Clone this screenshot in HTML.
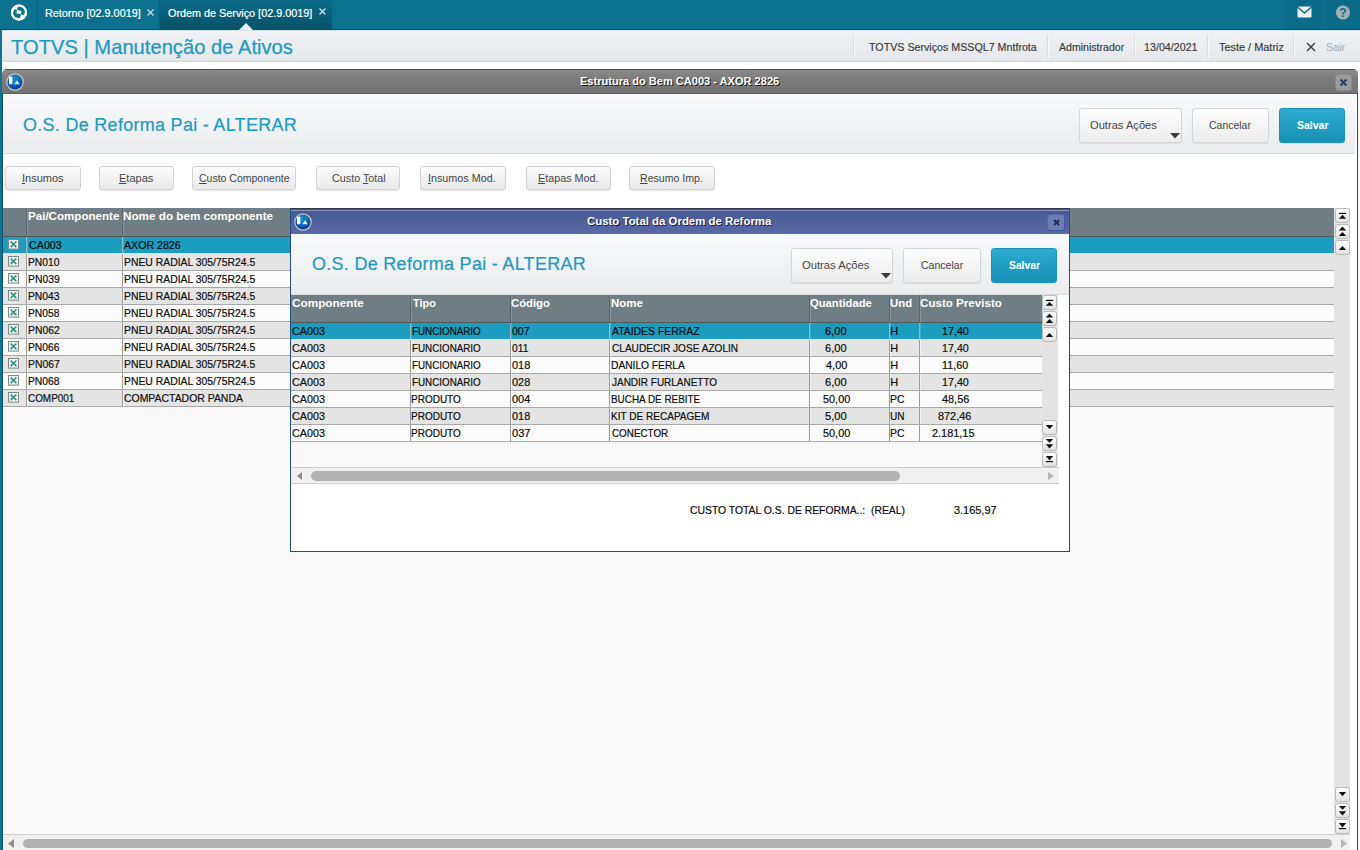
<!DOCTYPE html>
<html lang="pt-BR">
<head>
<meta charset="utf-8">
<title>TOTVS | Manutenção de Ativos</title>
<style>
*{box-sizing:border-box;margin:0;padding:0}
html,body{width:1360px;height:850px;overflow:hidden;background:#f9f9f9;font-family:"Liberation Sans",Arial,sans-serif;font-size:11px;color:#222}
.abs{position:absolute}
#page{position:relative;width:1360px;height:850px;overflow:hidden;background:#f9f9f9}
.t{position:absolute;white-space:pre;line-height:1;transform-origin:0 0}
.t u{text-decoration:underline;text-underline-offset:1px}
#topbar{left:0;top:0;width:1360px;height:30px;background:#0c718e}
#topbar .sep{position:absolute;top:0;width:1px;height:30px;background:#0a5f79}
#bar2{left:2px;top:30px;width:1358px;height:32px;background:linear-gradient(#cfe2e8 0,#cfe2e8 1px,#f0f2f5 1px,#e5e8eb 30px,#d6dadd 31px,#d6dadd 32px)}
#bar2 .s{position:absolute;top:5px;width:1px;height:22px;background:#dadde0;border-right:1px solid #f7f8f9;box-sizing:content-box}
.hdr{position:absolute;background:linear-gradient(#f8f9fa,#ebecee);border-bottom:1px solid #d9dadc}
.btn{position:absolute;border:1px solid #d4d4d4;border-radius:3px;background:linear-gradient(#fdfdfd,#ececec);box-shadow:0 1px 1px rgba(0,0,0,.08)}
.btn.pri{border:1px solid #1a93b6;background:linear-gradient(#2eabd0,#1790b5)}
.tb{position:absolute;top:166px;height:24px;border:1px solid #d2d2d2;border-radius:3px;background:linear-gradient(#fcfcfc,#e9e9e9);box-shadow:0 1px 1px rgba(0,0,0,.1)}
.row{position:absolute;height:17px;border-bottom:1px solid #a9a9a9}
.row.o{background:#fbfbfb}
.row.e{background:#e4e4e4}
.row.sel{background:#1c9dc0;border-bottom-color:#cfe3ea}
.vs{position:absolute;width:2px;border-left:1px solid #9c9c9c;background:rgba(255,255,255,.55)}
.vs.h{border-left-color:#55636a;background:rgba(255,255,255,.18)}
.vs.s{border-left-color:#8fb9c6;background:rgba(255,255,255,.15)}
.sb{position:absolute;width:15px;height:15px;border:1px solid #bababa;border-radius:3px;background:linear-gradient(#fdfdfd,#e2e2e2)}
.sb svg{position:absolute;left:-1px;top:-1px}
</style>
</head>
<body>
<div id="page">
<div class="abs" style="left:0;top:30px;width:2px;height:820px;background:#10748f"></div>
<div id="topbar" class="abs">
<div class="abs" style="left:0;top:29px;width:1360px;height:1px;background:#085a72"></div>
<svg class="abs" style="left:9px;top:2px" width="20" height="21" viewBox="0 0 20 21">
  <circle cx="10" cy="10.5" r="8" fill="#fff"/>
  <g transform="rotate(12 10 10.5)"><path fill-rule="evenodd" fill="#0c718e" d="M7.6 4.6 H15.6 V11.9 H7.6 Z M4.4 8.4 H12.2 V16 H4.4 Z"/></g>
  <circle cx="10" cy="10.5" r="7" fill="none" stroke="#fff" stroke-width="2"/>
</svg>
<div class="sep" style="left:37px"></div>
<span class="t" style="left:45.22px;top:8px;font-size:11px;color:#fff;transform:scaleX(0.9843);-webkit-text-stroke:.2px #fff">Retorno [02.9.0019]</span>
<svg class="abs" style="left:147px;top:9px" width="7" height="7" viewBox="0 0 7 7"><path d="M.5 .5 L6.5 6.5 M6.5 .5 L.5 6.5" stroke="#d3e3ea" stroke-width="1.2" fill="none"/></svg>
<div class="sep" style="left:159px"></div>
<div class="abs" style="left:160px;top:0;width:172px;height:30px;background:linear-gradient(#0c6d89,#075168)"></div>
<span class="t" style="left:167.91px;top:8px;font-size:11px;color:#fff;transform:scaleX(0.9828);-webkit-text-stroke:.2px #fff">Ordem de Serviço [02.9.0019]</span>
<svg class="abs" style="left:319px;top:8px" width="7" height="7" viewBox="0 0 7 7"><path d="M.5 .5 L6.5 6.5 M6.5 .5 L.5 6.5" stroke="#d3e3ea" stroke-width="1.2" fill="none"/></svg>
<div class="abs" style="left:239px;top:23px;width:0;height:0;border-left:7px solid transparent;border-right:7px solid transparent;border-bottom:7px solid #eff1f4"></div>
<div class="abs" style="left:1283px;top:0;width:77px;height:29px;background:linear-gradient(90deg,#0c718e,#0a6c89 7px)"></div>
<div class="sep" style="left:1323px;background:#266a86;height:29px"></div>
<svg class="abs" style="left:1297px;top:6px" width="16" height="13" viewBox="0 0 16 13">
  <rect x="0.5" y="0.5" width="14" height="11" rx="1.2" fill="#e9eff2"/>
  <path d="M0.5 1 L7.5 7 L14.5 1" fill="none" stroke="#0a6c89" stroke-width="1.5"/></svg>
<svg class="abs" style="left:1335px;top:5px" width="16" height="16" viewBox="0 0 16 16">
  <circle cx="8" cy="7.5" r="7" fill="#a3b1b6"/>
  <text x="8" y="12" font-family="Liberation Sans, sans-serif" font-weight="bold" font-size="12" text-anchor="middle" fill="#0a6c89">?</text></svg>
</div>
<div id="bar2" class="abs">
<div class="s" style="left:851px"></div>
<div class="s" style="left:1045px"></div>
<div class="s" style="left:1132px"></div>
<div class="s" style="left:1205px"></div>
<div class="s" style="left:1291px"></div>
</div>
<span class="t" style="left:10.6px;top:37px;font-size:20.2px;color:#1b9bc1;transform:scaleX(0.9995);-webkit-text-stroke:.25px #1b9bc1">TOTVS | Manutenção de Ativos</span>
<span class="t" style="left:869.26px;top:42px;font-size:11px;color:#383838;transform:scaleX(0.9710);-webkit-text-stroke:.15px #383838">TOTVS Serviços MSSQL7 Mntfrota</span>
<span class="t" style="left:1058.9px;top:42px;font-size:11px;color:#383838;transform:scaleX(0.9609);-webkit-text-stroke:.15px #383838">Administrador</span>
<span class="t" style="left:1143.97px;top:42px;font-size:11px;color:#383838;transform:scaleX(0.9730);-webkit-text-stroke:.15px #383838">13/04/2021</span>
<span class="t" style="left:1218.65px;top:42px;font-size:11px;color:#383838;transform:scaleX(0.9922);-webkit-text-stroke:.15px #383838">Teste / Matriz</span>
<svg class="abs" style="left:1306px;top:42px" width="10" height="10" viewBox="0 0 10 10"><path d="M1 1 L9 9 M9 1 L1 9" stroke="#444" stroke-width="1.5" fill="none"/></svg>
<span class="t" style="left:1326.11px;top:42px;font-size:11px;color:#a4a9ad;transform:scaleX(0.9789)">Sair</span>
<div class="abs" style="left:2px;top:62px;width:1358px;height:7px;background:#fff"></div>
<div class="abs" style="left:2px;top:69px;width:1356px;height:25px;border-radius:5px 5px 0 0;background:linear-gradient(#4e4e4e 0,#4e4e4e 1px,#8c8c8c 1px,#868686 3px,#7a7a7a 45%,#747474 23px,#747474 24px,#5c5c5c 24px)"></div>
<span class="t" style="left:580.05px;top:76px;font-size:11px;color:#fff;transform:scaleX(1.0046);font-weight:bold;text-shadow:1px 1px 0 #1c1c1c">Estrutura do Bem CA003 - AXOR 2826</span>
<svg class="abs" style="left:4.5px;top:72px" width="20" height="20" viewBox="0 0 20 20">
  <defs><radialGradient id="bga" cx="45%" cy="30%" r="75%"><stop offset="0" stop-color="#1f8fdc"/><stop offset="0.55" stop-color="#0c62b8"/><stop offset="1" stop-color="#07358a"/></radialGradient></defs>
  <circle cx="10" cy="10" r="8.8" fill="#c9c7c0"/>
  <circle cx="10" cy="10" r="7.6" fill="url(#bga)"/>
  <rect x="4" y="4.6" width="3.4" height="7.6" rx=".8" fill="#fff" opacity=".95"/>
  <rect x="9.6" y="4.6" width="4.8" height="4" fill="#0a86a6" opacity=".75"/>
  <path d="M12 8.2 L14.8 12.2 L9.2 12.2 Z" fill="#d9f1fc"/>
</svg>
<div class="abs" style="left:1335px;top:74px;width:17px;height:17px;border-radius:3px;background:#9b9b9b;border:1px solid #8b8b8b"></div>
<svg class="abs" style="left:1339px;top:78px" width="9" height="9" viewBox="0 0 9 9"><path d="M1.5 1.5 L7.5 7.5 M7.5 1.5 L1.5 7.5" stroke="#2a3a5e" stroke-width="2" fill="none"/></svg>
<div class="abs" style="left:2px;top:94px;width:1356px;height:756px;background:#fff;border-left:1px solid #0e4f7c;border-right:1px solid #1d4f82"></div>
<div class="hdr" style="left:3px;top:94px;width:1352px;height:60px"></div>
<span class="t" style="left:23.45px;top:116px;font-size:18px;color:#1b9bc1;transform:scaleX(0.9985);letter-spacing:.3px;-webkit-text-stroke:.2px #1b9bc1">O.S. De Reforma Pai - ALTERAR</span>
<div class="btn" style="left:1079px;top:108px;width:103px;height:35px"></div>
<span class="t" style="left:1090.42px;top:120px;font-size:11.5px;color:#444;transform:scaleX(0.9685)">Outras Ações</span>
<svg class="abs" style="left:1169.5px;top:133px" width="10" height="6" viewBox="0 0 10 6"><path d="M0 0 L10 0 L5 5.5 Z" fill="#3a3a3a"/></svg>
<div class="btn" style="left:1192px;top:108px;width:77px;height:35px"></div>
<span class="t" style="left:1209.14px;top:120px;font-size:11.5px;color:#444;transform:scaleX(0.9105)">Cancelar</span>
<div class="btn pri" style="left:1279px;top:108px;width:66px;height:35px"></div>
<span class="t" style="left:1296.54px;top:120px;font-size:11.5px;color:#fff;transform:scaleX(0.9118);font-weight:bold">Salvar</span>
<div class="tb" style="left:5px;width:76px"></div>
<span class="t" style="left:21.5px;top:173px;font-size:11px;color:#454545;transform:scaleX(0.9988)"><u>I</u>nsumos</span>
<div class="tb" style="left:99px;width:75px"></div>
<span class="t" style="left:118.6px;top:173px;font-size:11px;color:#454545;transform:scaleX(1.0030)"><u>E</u>tapas</span>
<div class="tb" style="left:192px;width:104px"></div>
<span class="t" style="left:198.52px;top:173px;font-size:11px;color:#454545;transform:scaleX(0.9547)"><u>C</u>usto Componente</span>
<div class="tb" style="left:316px;width:84px"></div>
<span class="t" style="left:331.91px;top:173px;font-size:11px;color:#454545;transform:scaleX(0.9794)">Custo <u>T</u>otal</span>
<div class="tb" style="left:420px;width:86px"></div>
<span class="t" style="left:428.42px;top:173px;font-size:11px;color:#454545;transform:scaleX(0.9791)"><u>I</u>nsumos Mod.</span>
<div class="tb" style="left:526px;width:85px"></div>
<span class="t" style="left:537.52px;top:173px;font-size:11px;color:#454545;transform:scaleX(0.9791)"><u>E</u>tapas Mod.</span>
<div class="tb" style="left:629px;width:86px"></div>
<span class="t" style="left:640.44px;top:173px;font-size:11px;color:#454545;transform:scaleX(0.9591)"><u>R</u>esumo Imp.</span>
<div class="abs" style="left:3px;top:208px;width:1331px;height:628px;background:#f9f9f9"></div>
<div class="abs" style="left:3px;top:208px;width:1331px;height:29px;background:#6f7e83;border-bottom:1px solid #4d595d"></div>
<div class="vs h" style="left:26px;top:208px;height:28px"></div>
<span class="t" style="left:27.74px;top:211px;font-size:11.5px;color:#fff;transform:scaleX(1.0067);font-weight:bold">Pai/Componente</span>
<div class="vs h" style="left:122px;top:208px;height:28px"></div>
<span class="t" style="left:123.04px;top:211px;font-size:11.5px;color:#fff;transform:scaleX(1.0171);font-weight:bold">Nome do bem componente</span>
<div class="row sel" style="left:3px;top:237px;width:1331px"></div>
<div class="vs s" style="left:26px;top:237px;height:16px"></div>
<div class="vs s" style="left:122px;top:237px;height:16px"></div>
<svg class="abs" style="left:8px;top:239px" width="11" height="11" viewBox="0 0 11 11"><rect x="0.5" y="0.5" width="10" height="9.6" fill="#f2f5f5" stroke="#7d8a8a"/><path d="M2.6 2.5 L8.4 8.1 M8.4 2.5 L2.6 8.1" stroke="#2b8a7c" stroke-width="1.5" fill="none"/></svg>
<span class="t" style="left:28.51px;top:240px;font-size:11px;color:#0d0d0d;transform:scaleX(0.9740);-webkit-text-stroke:.2px #0d0d0d">CA003</span>
<span class="t" style="left:124.3px;top:240px;font-size:11px;color:#0d0d0d;transform:scaleX(0.9648);-webkit-text-stroke:.2px #0d0d0d">AXOR 2826</span>
<div class="row e" style="left:3px;top:254px;width:1331px"></div>
<div class="vs " style="left:26px;top:254px;height:16px"></div>
<div class="vs " style="left:122px;top:254px;height:16px"></div>
<svg class="abs" style="left:8px;top:256px" width="11" height="11" viewBox="0 0 11 11"><rect x="0.5" y="0.5" width="10" height="9.6" fill="#f2f5f5" stroke="#7d8a8a"/><path d="M2.6 2.5 L8.4 8.1 M8.4 2.5 L2.6 8.1" stroke="#2b8a7c" stroke-width="1.5" fill="none"/></svg>
<span class="t" style="left:27.96px;top:257px;font-size:11px;color:#0d0d0d;transform:scaleX(0.9364);-webkit-text-stroke:.2px #0d0d0d">PN010</span>
<span class="t" style="left:123.66px;top:257px;font-size:11px;color:#0d0d0d;transform:scaleX(0.9440);-webkit-text-stroke:.2px #0d0d0d">PNEU RADIAL 305/75R24.5</span>
<div class="row o" style="left:3px;top:271px;width:1331px"></div>
<div class="vs " style="left:26px;top:271px;height:16px"></div>
<div class="vs " style="left:122px;top:271px;height:16px"></div>
<svg class="abs" style="left:8px;top:273px" width="11" height="11" viewBox="0 0 11 11"><rect x="0.5" y="0.5" width="10" height="9.6" fill="#f2f5f5" stroke="#7d8a8a"/><path d="M2.6 2.5 L8.4 8.1 M8.4 2.5 L2.6 8.1" stroke="#2b8a7c" stroke-width="1.5" fill="none"/></svg>
<span class="t" style="left:27.96px;top:274px;font-size:11px;color:#0d0d0d;transform:scaleX(0.9438);-webkit-text-stroke:.2px #0d0d0d">PN039</span>
<span class="t" style="left:123.66px;top:274px;font-size:11px;color:#0d0d0d;transform:scaleX(0.9440);-webkit-text-stroke:.2px #0d0d0d">PNEU RADIAL 305/75R24.5</span>
<div class="row e" style="left:3px;top:288px;width:1331px"></div>
<div class="vs " style="left:26px;top:288px;height:16px"></div>
<div class="vs " style="left:122px;top:288px;height:16px"></div>
<svg class="abs" style="left:8px;top:290px" width="11" height="11" viewBox="0 0 11 11"><rect x="0.5" y="0.5" width="10" height="9.6" fill="#f2f5f5" stroke="#7d8a8a"/><path d="M2.6 2.5 L8.4 8.1 M8.4 2.5 L2.6 8.1" stroke="#2b8a7c" stroke-width="1.5" fill="none"/></svg>
<span class="t" style="left:27.96px;top:291px;font-size:11px;color:#0d0d0d;transform:scaleX(0.9364);-webkit-text-stroke:.2px #0d0d0d">PN043</span>
<span class="t" style="left:123.66px;top:291px;font-size:11px;color:#0d0d0d;transform:scaleX(0.9440);-webkit-text-stroke:.2px #0d0d0d">PNEU RADIAL 305/75R24.5</span>
<div class="row o" style="left:3px;top:305px;width:1331px"></div>
<div class="vs " style="left:26px;top:305px;height:16px"></div>
<div class="vs " style="left:122px;top:305px;height:16px"></div>
<svg class="abs" style="left:8px;top:307px" width="11" height="11" viewBox="0 0 11 11"><rect x="0.5" y="0.5" width="10" height="9.6" fill="#f2f5f5" stroke="#7d8a8a"/><path d="M2.6 2.5 L8.4 8.1 M8.4 2.5 L2.6 8.1" stroke="#2b8a7c" stroke-width="1.5" fill="none"/></svg>
<span class="t" style="left:27.96px;top:308px;font-size:11px;color:#0d0d0d;transform:scaleX(0.9364);-webkit-text-stroke:.2px #0d0d0d">PN058</span>
<span class="t" style="left:123.66px;top:308px;font-size:11px;color:#0d0d0d;transform:scaleX(0.9440);-webkit-text-stroke:.2px #0d0d0d">PNEU RADIAL 305/75R24.5</span>
<div class="row e" style="left:3px;top:322px;width:1331px"></div>
<div class="vs " style="left:26px;top:322px;height:16px"></div>
<div class="vs " style="left:122px;top:322px;height:16px"></div>
<svg class="abs" style="left:8px;top:324px" width="11" height="11" viewBox="0 0 11 11"><rect x="0.5" y="0.5" width="10" height="9.6" fill="#f2f5f5" stroke="#7d8a8a"/><path d="M2.6 2.5 L8.4 8.1 M8.4 2.5 L2.6 8.1" stroke="#2b8a7c" stroke-width="1.5" fill="none"/></svg>
<span class="t" style="left:27.96px;top:325px;font-size:11px;color:#0d0d0d;transform:scaleX(0.9438);-webkit-text-stroke:.2px #0d0d0d">PN062</span>
<span class="t" style="left:123.66px;top:325px;font-size:11px;color:#0d0d0d;transform:scaleX(0.9440);-webkit-text-stroke:.2px #0d0d0d">PNEU RADIAL 305/75R24.5</span>
<div class="row o" style="left:3px;top:339px;width:1331px"></div>
<div class="vs " style="left:26px;top:339px;height:16px"></div>
<div class="vs " style="left:122px;top:339px;height:16px"></div>
<svg class="abs" style="left:8px;top:341px" width="11" height="11" viewBox="0 0 11 11"><rect x="0.5" y="0.5" width="10" height="9.6" fill="#f2f5f5" stroke="#7d8a8a"/><path d="M2.6 2.5 L8.4 8.1 M8.4 2.5 L2.6 8.1" stroke="#2b8a7c" stroke-width="1.5" fill="none"/></svg>
<span class="t" style="left:27.96px;top:342px;font-size:11px;color:#0d0d0d;transform:scaleX(0.9364);-webkit-text-stroke:.2px #0d0d0d">PN066</span>
<span class="t" style="left:123.66px;top:342px;font-size:11px;color:#0d0d0d;transform:scaleX(0.9440);-webkit-text-stroke:.2px #0d0d0d">PNEU RADIAL 305/75R24.5</span>
<div class="row e" style="left:3px;top:356px;width:1331px"></div>
<div class="vs " style="left:26px;top:356px;height:16px"></div>
<div class="vs " style="left:122px;top:356px;height:16px"></div>
<svg class="abs" style="left:8px;top:358px" width="11" height="11" viewBox="0 0 11 11"><rect x="0.5" y="0.5" width="10" height="9.6" fill="#f2f5f5" stroke="#7d8a8a"/><path d="M2.6 2.5 L8.4 8.1 M8.4 2.5 L2.6 8.1" stroke="#2b8a7c" stroke-width="1.5" fill="none"/></svg>
<span class="t" style="left:27.96px;top:359px;font-size:11px;color:#0d0d0d;transform:scaleX(0.9438);-webkit-text-stroke:.2px #0d0d0d">PN067</span>
<span class="t" style="left:123.66px;top:359px;font-size:11px;color:#0d0d0d;transform:scaleX(0.9440);-webkit-text-stroke:.2px #0d0d0d">PNEU RADIAL 305/75R24.5</span>
<div class="row o" style="left:3px;top:373px;width:1331px"></div>
<div class="vs " style="left:26px;top:373px;height:16px"></div>
<div class="vs " style="left:122px;top:373px;height:16px"></div>
<svg class="abs" style="left:8px;top:375px" width="11" height="11" viewBox="0 0 11 11"><rect x="0.5" y="0.5" width="10" height="9.6" fill="#f2f5f5" stroke="#7d8a8a"/><path d="M2.6 2.5 L8.4 8.1 M8.4 2.5 L2.6 8.1" stroke="#2b8a7c" stroke-width="1.5" fill="none"/></svg>
<span class="t" style="left:27.96px;top:376px;font-size:11px;color:#0d0d0d;transform:scaleX(0.9364);-webkit-text-stroke:.2px #0d0d0d">PN068</span>
<span class="t" style="left:123.66px;top:376px;font-size:11px;color:#0d0d0d;transform:scaleX(0.9440);-webkit-text-stroke:.2px #0d0d0d">PNEU RADIAL 305/75R24.5</span>
<div class="row e" style="left:3px;top:390px;width:1331px"></div>
<div class="vs " style="left:26px;top:390px;height:16px"></div>
<div class="vs " style="left:122px;top:390px;height:16px"></div>
<svg class="abs" style="left:8px;top:392px" width="11" height="11" viewBox="0 0 11 11"><rect x="0.5" y="0.5" width="10" height="9.6" fill="#f2f5f5" stroke="#7d8a8a"/><path d="M2.6 2.5 L8.4 8.1 M8.4 2.5 L2.6 8.1" stroke="#2b8a7c" stroke-width="1.5" fill="none"/></svg>
<span class="t" style="left:28.45px;top:393px;font-size:11px;color:#0d0d0d;transform:scaleX(0.9015);-webkit-text-stroke:.2px #0d0d0d">COMP001</span>
<span class="t" style="left:123.83px;top:393px;font-size:11px;color:#0d0d0d;transform:scaleX(0.9491);-webkit-text-stroke:.2px #0d0d0d">COMPACTADOR PANDA</span>
<div class="abs" style="left:1334px;top:208px;width:16px;height:626px;background:#e3e3e3"></div>
<div class="sb" style="left:1335px;top:208px"><svg width="15" height="15" viewBox="0 0 15 15"><rect x="3.9" y="4.8" width="7.2" height="1.2" fill="#111"/><path d="M7.5 6.8 L11.2 10.8 L3.8 10.8 Z" fill="#111"/></svg></div>
<div class="sb" style="left:1335px;top:224px"><svg width="15" height="15" viewBox="0 0 15 15"><path d="M7.5 2.6 L11.2 6.4 L3.8 6.4 Z" fill="#111"/><path d="M7.5 8 L11.2 11.9 L3.8 11.9 Z" fill="#111"/></svg></div>
<div class="sb" style="left:1335px;top:240px"><svg width="15" height="15" viewBox="0 0 15 15"><path d="M7.5 6 L11.2 9.9 L3.8 9.9 Z" fill="#111"/></svg></div>
<div class="sb" style="left:1335px;top:787px"><svg width="15" height="15" viewBox="0 0 15 15"><path d="M3.8 5 L11.2 5 L7.5 9.3 Z" fill="#111"/></svg></div>
<div class="sb" style="left:1335px;top:803px"><svg width="15" height="15" viewBox="0 0 15 15"><path d="M3.8 2.9 L11.2 2.9 L7.5 6.7 Z" fill="#111"/><path d="M3.8 8.3 L11.2 8.3 L7.5 12.4 Z" fill="#111"/></svg></div>
<div class="sb" style="left:1335px;top:819px"><svg width="15" height="15" viewBox="0 0 15 15"><path d="M3.8 4.1 L11.2 4.1 L7.5 8.5 Z" fill="#111"/><rect x="3.9" y="9" width="7.2" height="1.2" fill="#111"/></svg></div>
<div class="abs" style="left:3px;top:834px;width:1347px;height:16px;background:#f1f1f1;border-top:1px solid #cfcfcf"></div>
<div class="abs" style="left:23px;top:839px;width:1309px;height:9px;border-radius:5px;background:#b1b1b1"></div>
<svg class="abs" style="left:8px;top:839px" width="6" height="9" viewBox="0 0 6 9"><path d="M6 0 L6 9 L0 4.5 Z" fill="#8d8d8d"/></svg>
<svg class="abs" style="left:1341px;top:839px" width="6" height="9" viewBox="0 0 6 9"><path d="M0 0 L0 9 L6 4.5 Z" fill="#b5b5b5"/></svg>
<div class="abs" style="left:290px;top:208px;width:780px;height:344px;background:#fff;border:1px solid #1d4f82;border-top:1px solid #33384a"></div>
<div class="abs" style="left:291px;top:209px;width:778px;height:25px;background:linear-gradient(#4b5272 0,#4b5272 1px,#8391c2 1px,#8391c2 2px,#485a95 2px,#4d5f9c 45%,#5a6aa6 100%)"></div>
<span class="t" style="left:587.18px;top:216px;font-size:11px;color:#fff;transform:scaleX(1.0375);font-weight:bold;text-shadow:1px 1px 0 #1a1f3a">Custo Total da Ordem de Reforma</span>
<svg class="abs" style="left:293.3px;top:211.6px" width="20" height="20" viewBox="0 0 20 20">
  <defs><radialGradient id="bgb" cx="45%" cy="30%" r="75%"><stop offset="0" stop-color="#1f8fdc"/><stop offset="0.55" stop-color="#0c62b8"/><stop offset="1" stop-color="#07358a"/></radialGradient></defs>
  <circle cx="10" cy="10" r="8.8" fill="#c9c7c0"/>
  <circle cx="10" cy="10" r="7.6" fill="url(#bgb)"/>
  <rect x="4" y="4.6" width="3.4" height="7.6" rx=".8" fill="#fff" opacity=".95"/>
  <rect x="9.6" y="4.6" width="4.8" height="4" fill="#0a86a6" opacity=".75"/>
  <path d="M12 8.2 L14.8 12.2 L9.2 12.2 Z" fill="#d9f1fc"/>
</svg>
<div class="abs" style="left:1047px;top:214px;width:18px;height:17px;border-radius:3px;background:#6e7db5;border:1px solid #5565a2;border-bottom-color:#3f4f8e;border-right-color:#46569a"></div>
<svg class="abs" style="left:1052px;top:218px" width="9" height="9" viewBox="0 0 9 9"><path d="M2 2 L7 7 M7 2 L2 7" stroke="#1f2a4d" stroke-width="1.8" fill="none"/></svg>
<div class="hdr" style="left:291px;top:234px;width:778px;height:61px"></div>
<span class="t" style="left:311.85px;top:255px;font-size:18px;color:#1b9bc1;transform:scaleX(0.9985);letter-spacing:.3px;-webkit-text-stroke:.2px #1b9bc1">O.S. De Reforma Pai - ALTERAR</span>
<div class="btn" style="left:791px;top:248px;width:102px;height:35px"></div>
<span class="t" style="left:802.21px;top:260px;font-size:11.5px;color:#444;transform:scaleX(0.9758)">Outras Ações</span>
<svg class="abs" style="left:881px;top:273px" width="10" height="6" viewBox="0 0 10 6"><path d="M0 0 L10 0 L5 5.5 Z" fill="#3a3a3a"/></svg>
<div class="btn" style="left:903px;top:248px;width:78px;height:35px"></div>
<span class="t" style="left:921.14px;top:260px;font-size:11.5px;color:#444;transform:scaleX(0.9171)">Cancelar</span>
<div class="btn pri" style="left:991px;top:248px;width:66px;height:35px"></div>
<span class="t" style="left:1008.95px;top:260px;font-size:11.5px;color:#fff;transform:scaleX(0.8971);font-weight:bold">Salvar</span>
<div class="abs" style="left:291px;top:295px;width:751px;height:172px;background:#f9f9f9"></div>
<div class="abs" style="left:291px;top:295px;width:751px;height:28px;background:#6f7e83;border-bottom:1px solid #4d595d"></div>
<span class="t" style="left:291.89px;top:298px;font-size:11.5px;color:#fff;transform:scaleX(1.0230);font-weight:bold">Componente</span>
<div class="vs h" style="left:410px;top:295px;height:27px"></div>
<span class="t" style="left:412.8px;top:298px;font-size:11.5px;color:#fff;transform:scaleX(0.9474);font-weight:bold">Tipo</span>
<div class="vs h" style="left:510px;top:295px;height:27px"></div>
<span class="t" style="left:511.41px;top:298px;font-size:11.5px;color:#fff;transform:scaleX(0.9832);font-weight:bold">Código</span>
<div class="vs h" style="left:609px;top:295px;height:27px"></div>
<span class="t" style="left:611.05px;top:298px;font-size:11.5px;color:#fff;transform:scaleX(0.9984);font-weight:bold">Nome</span>
<div class="vs h" style="left:809px;top:295px;height:27px"></div>
<span class="t" style="left:810.41px;top:298px;font-size:11.5px;color:#fff;transform:scaleX(0.9760);font-weight:bold">Quantidade</span>
<div class="vs h" style="left:889px;top:295px;height:27px"></div>
<span class="t" style="left:889.96px;top:298px;font-size:11.5px;color:#fff;transform:scaleX(0.9880);font-weight:bold">Und</span>
<div class="vs h" style="left:919px;top:295px;height:27px"></div>
<span class="t" style="left:920px;top:298px;font-size:11.5px;color:#fff;transform:scaleX(1.0093);font-weight:bold">Custo Previsto</span>
<div class="row sel" style="left:291px;top:323px;width:751px"></div>
<div class="vs s" style="left:410px;top:323px;height:16px"></div>
<div class="vs s" style="left:510px;top:323px;height:16px"></div>
<div class="vs s" style="left:609px;top:323px;height:16px"></div>
<div class="vs s" style="left:809px;top:323px;height:16px"></div>
<div class="vs s" style="left:889px;top:323px;height:16px"></div>
<div class="vs s" style="left:919px;top:323px;height:16px"></div>
<span class="t" style="left:292.41px;top:326px;font-size:11px;color:#0d0d0d;transform:scaleX(0.9802);-webkit-text-stroke:.2px #0d0d0d">CA003</span>
<span class="t" style="left:412.01px;top:326px;font-size:11px;color:#0d0d0d;transform:scaleX(0.8927);-webkit-text-stroke:.2px #0d0d0d">FUNCIONARIO</span>
<span class="t" style="left:511.92px;top:326px;font-size:11px;color:#0d0d0d;transform:scaleX(0.9507);-webkit-text-stroke:.2px #0d0d0d">007</span>
<span class="t" style="left:612.1px;top:326px;font-size:11px;color:#0d0d0d;transform:scaleX(0.9463);-webkit-text-stroke:.2px #0d0d0d">ATAIDES FERRAZ</span>
<span class="t" style="left:825.4px;top:326px;font-size:11px;color:#0d0d0d;transform:scaleX(1.0098);-webkit-text-stroke:.2px #0d0d0d">6,00</span>
<span class="t" style="left:890.2px;top:326px;font-size:11px;color:#0d0d0d;transform:scaleX(1.0000);-webkit-text-stroke:.2px #0d0d0d">H</span>
<span class="t" style="left:941.77px;top:326px;font-size:11px;color:#0d0d0d;transform:scaleX(0.9736);-webkit-text-stroke:.2px #0d0d0d">17,40</span>
<div class="row e" style="left:291px;top:340px;width:751px"></div>
<div class="vs " style="left:410px;top:340px;height:16px"></div>
<div class="vs " style="left:510px;top:340px;height:16px"></div>
<div class="vs " style="left:609px;top:340px;height:16px"></div>
<div class="vs " style="left:809px;top:340px;height:16px"></div>
<div class="vs " style="left:889px;top:340px;height:16px"></div>
<div class="vs " style="left:919px;top:340px;height:16px"></div>
<span class="t" style="left:292.41px;top:343px;font-size:11px;color:#0d0d0d;transform:scaleX(0.9802);-webkit-text-stroke:.2px #0d0d0d">CA003</span>
<span class="t" style="left:412.01px;top:343px;font-size:11px;color:#0d0d0d;transform:scaleX(0.8927);-webkit-text-stroke:.2px #0d0d0d">FUNCIONARIO</span>
<span class="t" style="left:511.93px;top:343px;font-size:11px;color:#0d0d0d;transform:scaleX(0.9333);-webkit-text-stroke:.2px #0d0d0d">011</span>
<span class="t" style="left:611.64px;top:343px;font-size:11px;color:#0d0d0d;transform:scaleX(0.9167);-webkit-text-stroke:.2px #0d0d0d">CLAUDECIR JOSE AZOLIN</span>
<span class="t" style="left:825.4px;top:343px;font-size:11px;color:#0d0d0d;transform:scaleX(1.0098);-webkit-text-stroke:.2px #0d0d0d">6,00</span>
<span class="t" style="left:890.2px;top:343px;font-size:11px;color:#0d0d0d;transform:scaleX(1.0000);-webkit-text-stroke:.2px #0d0d0d">H</span>
<span class="t" style="left:941.77px;top:343px;font-size:11px;color:#0d0d0d;transform:scaleX(0.9736);-webkit-text-stroke:.2px #0d0d0d">17,40</span>
<div class="row o" style="left:291px;top:357px;width:751px"></div>
<div class="vs " style="left:410px;top:357px;height:16px"></div>
<div class="vs " style="left:510px;top:357px;height:16px"></div>
<div class="vs " style="left:609px;top:357px;height:16px"></div>
<div class="vs " style="left:809px;top:357px;height:16px"></div>
<div class="vs " style="left:889px;top:357px;height:16px"></div>
<div class="vs " style="left:919px;top:357px;height:16px"></div>
<span class="t" style="left:292.41px;top:360px;font-size:11px;color:#0d0d0d;transform:scaleX(0.9802);-webkit-text-stroke:.2px #0d0d0d">CA003</span>
<span class="t" style="left:412.01px;top:360px;font-size:11px;color:#0d0d0d;transform:scaleX(0.8927);-webkit-text-stroke:.2px #0d0d0d">FUNCIONARIO</span>
<span class="t" style="left:511.9px;top:360px;font-size:11px;color:#0d0d0d;transform:scaleX(0.9943);-webkit-text-stroke:.2px #0d0d0d">018</span>
<span class="t" style="left:611.17px;top:360px;font-size:11px;color:#0d0d0d;transform:scaleX(0.9287);-webkit-text-stroke:.2px #0d0d0d">DANILO FERLA</span>
<span class="t" style="left:825.65px;top:360px;font-size:11px;color:#0d0d0d;transform:scaleX(0.9976);-webkit-text-stroke:.2px #0d0d0d">4,00</span>
<span class="t" style="left:890.2px;top:360px;font-size:11px;color:#0d0d0d;transform:scaleX(1.0000);-webkit-text-stroke:.2px #0d0d0d">H</span>
<span class="t" style="left:941.56px;top:360px;font-size:11px;color:#0d0d0d;transform:scaleX(0.9804);-webkit-text-stroke:.2px #0d0d0d">11,60</span>
<div class="row e" style="left:291px;top:374px;width:751px"></div>
<div class="vs " style="left:410px;top:374px;height:16px"></div>
<div class="vs " style="left:510px;top:374px;height:16px"></div>
<div class="vs " style="left:609px;top:374px;height:16px"></div>
<div class="vs " style="left:809px;top:374px;height:16px"></div>
<div class="vs " style="left:889px;top:374px;height:16px"></div>
<div class="vs " style="left:919px;top:374px;height:16px"></div>
<span class="t" style="left:292.41px;top:377px;font-size:11px;color:#0d0d0d;transform:scaleX(0.9802);-webkit-text-stroke:.2px #0d0d0d">CA003</span>
<span class="t" style="left:412.01px;top:377px;font-size:11px;color:#0d0d0d;transform:scaleX(0.8927);-webkit-text-stroke:.2px #0d0d0d">FUNCIONARIO</span>
<span class="t" style="left:511.9px;top:377px;font-size:11px;color:#0d0d0d;transform:scaleX(0.9943);-webkit-text-stroke:.2px #0d0d0d">028</span>
<span class="t" style="left:611.87px;top:377px;font-size:11px;color:#0d0d0d;transform:scaleX(0.9067);-webkit-text-stroke:.2px #0d0d0d">JANDIR FURLANETTO</span>
<span class="t" style="left:825.4px;top:377px;font-size:11px;color:#0d0d0d;transform:scaleX(1.0098);-webkit-text-stroke:.2px #0d0d0d">6,00</span>
<span class="t" style="left:890.2px;top:377px;font-size:11px;color:#0d0d0d;transform:scaleX(1.0000);-webkit-text-stroke:.2px #0d0d0d">H</span>
<span class="t" style="left:941.77px;top:377px;font-size:11px;color:#0d0d0d;transform:scaleX(0.9736);-webkit-text-stroke:.2px #0d0d0d">17,40</span>
<div class="row o" style="left:291px;top:391px;width:751px"></div>
<div class="vs " style="left:410px;top:391px;height:16px"></div>
<div class="vs " style="left:510px;top:391px;height:16px"></div>
<div class="vs " style="left:609px;top:391px;height:16px"></div>
<div class="vs " style="left:809px;top:391px;height:16px"></div>
<div class="vs " style="left:889px;top:391px;height:16px"></div>
<div class="vs " style="left:919px;top:391px;height:16px"></div>
<span class="t" style="left:292.41px;top:394px;font-size:11px;color:#0d0d0d;transform:scaleX(0.9802);-webkit-text-stroke:.2px #0d0d0d">CA003</span>
<span class="t" style="left:411.39px;top:394px;font-size:11px;color:#0d0d0d;transform:scaleX(0.9089);-webkit-text-stroke:.2px #0d0d0d">PRODUTO</span>
<span class="t" style="left:511.9px;top:394px;font-size:11px;color:#0d0d0d;transform:scaleX(0.9943);-webkit-text-stroke:.2px #0d0d0d">004</span>
<span class="t" style="left:611.2px;top:394px;font-size:11px;color:#0d0d0d;transform:scaleX(0.9005);-webkit-text-stroke:.2px #0d0d0d">BUCHA DE REBITE</span>
<span class="t" style="left:822.6px;top:394px;font-size:11px;color:#0d0d0d;transform:scaleX(0.9907);-webkit-text-stroke:.2px #0d0d0d">50,00</span>
<span class="t" style="left:890.05px;top:394px;font-size:11px;color:#0d0d0d;transform:scaleX(0.9455);-webkit-text-stroke:.2px #0d0d0d">PC</span>
<span class="t" style="left:941.95px;top:394px;font-size:11px;color:#0d0d0d;transform:scaleX(0.9907);-webkit-text-stroke:.2px #0d0d0d">48,56</span>
<div class="row e" style="left:291px;top:408px;width:751px"></div>
<div class="vs " style="left:410px;top:408px;height:16px"></div>
<div class="vs " style="left:510px;top:408px;height:16px"></div>
<div class="vs " style="left:609px;top:408px;height:16px"></div>
<div class="vs " style="left:809px;top:408px;height:16px"></div>
<div class="vs " style="left:889px;top:408px;height:16px"></div>
<div class="vs " style="left:919px;top:408px;height:16px"></div>
<span class="t" style="left:292.41px;top:411px;font-size:11px;color:#0d0d0d;transform:scaleX(0.9802);-webkit-text-stroke:.2px #0d0d0d">CA003</span>
<span class="t" style="left:411.39px;top:411px;font-size:11px;color:#0d0d0d;transform:scaleX(0.9089);-webkit-text-stroke:.2px #0d0d0d">PRODUTO</span>
<span class="t" style="left:511.9px;top:411px;font-size:11px;color:#0d0d0d;transform:scaleX(0.9943);-webkit-text-stroke:.2px #0d0d0d">018</span>
<span class="t" style="left:611.19px;top:411px;font-size:11px;color:#0d0d0d;transform:scaleX(0.9132);-webkit-text-stroke:.2px #0d0d0d">KIT DE RECAPAGEM</span>
<span class="t" style="left:825.4px;top:411px;font-size:11px;color:#0d0d0d;transform:scaleX(1.0098);-webkit-text-stroke:.2px #0d0d0d">5,00</span>
<span class="t" style="left:890.32px;top:411px;font-size:11px;color:#0d0d0d;transform:scaleX(0.9123);-webkit-text-stroke:.2px #0d0d0d">UN</span>
<span class="t" style="left:938.41px;top:411px;font-size:11px;color:#0d0d0d;transform:scaleX(0.9893);-webkit-text-stroke:.2px #0d0d0d">872,46</span>
<div class="row o" style="left:291px;top:425px;width:751px"></div>
<div class="vs " style="left:410px;top:425px;height:16px"></div>
<div class="vs " style="left:510px;top:425px;height:16px"></div>
<div class="vs " style="left:609px;top:425px;height:16px"></div>
<div class="vs " style="left:809px;top:425px;height:16px"></div>
<div class="vs " style="left:889px;top:425px;height:16px"></div>
<div class="vs " style="left:919px;top:425px;height:16px"></div>
<span class="t" style="left:292.41px;top:428px;font-size:11px;color:#0d0d0d;transform:scaleX(0.9802);-webkit-text-stroke:.2px #0d0d0d">CA003</span>
<span class="t" style="left:411.39px;top:428px;font-size:11px;color:#0d0d0d;transform:scaleX(0.9089);-webkit-text-stroke:.2px #0d0d0d">PRODUTO</span>
<span class="t" style="left:511.9px;top:428px;font-size:11px;color:#0d0d0d;transform:scaleX(1.0087);-webkit-text-stroke:.2px #0d0d0d">037</span>
<span class="t" style="left:611.65px;top:428px;font-size:11px;color:#0d0d0d;transform:scaleX(0.8955);-webkit-text-stroke:.2px #0d0d0d">CONECTOR</span>
<span class="t" style="left:822.6px;top:428px;font-size:11px;color:#0d0d0d;transform:scaleX(0.9907);-webkit-text-stroke:.2px #0d0d0d">50,00</span>
<span class="t" style="left:890.05px;top:428px;font-size:11px;color:#0d0d0d;transform:scaleX(0.9455);-webkit-text-stroke:.2px #0d0d0d">PC</span>
<span class="t" style="left:932.3px;top:428px;font-size:11px;color:#0d0d0d;transform:scaleX(0.9916);-webkit-text-stroke:.2px #0d0d0d">2.181,15</span>
<div class="abs" style="left:1042px;top:295px;width:16px;height:172px;background:#e3e3e3"></div>
<div class="sb" style="left:1042px;top:295px"><svg width="15" height="15" viewBox="0 0 15 15"><rect x="3.9" y="4.8" width="7.2" height="1.2" fill="#111"/><path d="M7.5 6.8 L11.2 10.8 L3.8 10.8 Z" fill="#111"/></svg></div>
<div class="sb" style="left:1042px;top:311px"><svg width="15" height="15" viewBox="0 0 15 15"><path d="M7.5 2.6 L11.2 6.4 L3.8 6.4 Z" fill="#111"/><path d="M7.5 8 L11.2 11.9 L3.8 11.9 Z" fill="#111"/></svg></div>
<div class="sb" style="left:1042px;top:327px"><svg width="15" height="15" viewBox="0 0 15 15"><path d="M7.5 6 L11.2 9.9 L3.8 9.9 Z" fill="#111"/></svg></div>
<div class="sb" style="left:1042px;top:420px"><svg width="15" height="15" viewBox="0 0 15 15"><path d="M3.8 5 L11.2 5 L7.5 9.3 Z" fill="#111"/></svg></div>
<div class="sb" style="left:1042px;top:436px"><svg width="15" height="15" viewBox="0 0 15 15"><path d="M3.8 2.9 L11.2 2.9 L7.5 6.7 Z" fill="#111"/><path d="M3.8 8.3 L11.2 8.3 L7.5 12.4 Z" fill="#111"/></svg></div>
<div class="sb" style="left:1042px;top:452px"><svg width="15" height="15" viewBox="0 0 15 15"><path d="M3.8 4.1 L11.2 4.1 L7.5 8.5 Z" fill="#111"/><rect x="3.9" y="9" width="7.2" height="1.2" fill="#111"/></svg></div>
<div class="abs" style="left:291px;top:467px;width:768px;height:17px;background:#f0f0f0;border-top:1px solid #cdcdcd;border-bottom:1px solid #cdcdcd"></div>
<div class="abs" style="left:311px;top:471px;width:589px;height:10px;border-radius:5px;background:#b1b1b1"></div>
<svg class="abs" style="left:297px;top:472px" width="5" height="8" viewBox="0 0 5 8"><path d="M5 0 L5 8 L0 4 Z" fill="#8d8d8d"/></svg>
<svg class="abs" style="left:1048px;top:472px" width="6" height="8" viewBox="0 0 6 8"><path d="M0 0 L0 8 L6 4 Z" fill="#b5b5b5"/></svg>
<span class="t" style="left:690.33px;top:505px;font-size:11px;color:#0d0d0d;transform:scaleX(0.9429);-webkit-text-stroke:.2px #0d0d0d">CUSTO TOTAL O.S. DE REFORMA..:  (REAL)</span>
<span class="t" style="left:954.1px;top:505px;font-size:11px;color:#0d0d0d;transform:scaleX(0.9940);-webkit-text-stroke:.2px #0d0d0d">3.165,97</span>
</div>
</body>
</html>
